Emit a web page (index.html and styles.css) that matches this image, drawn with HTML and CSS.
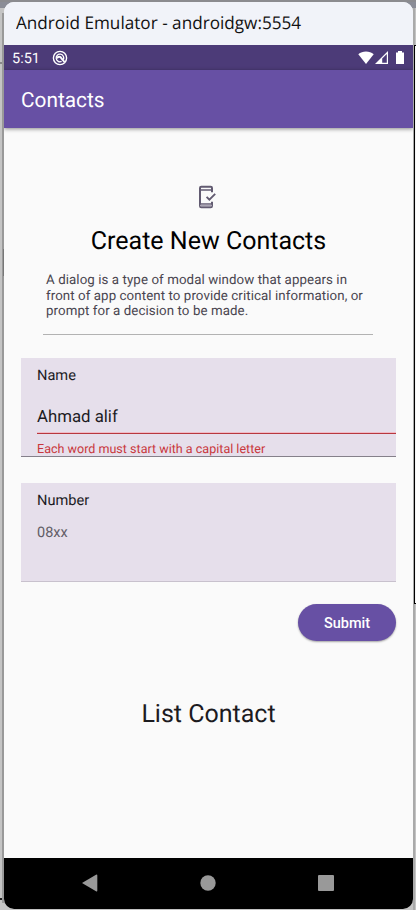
FILE: index.html
```html
<!DOCTYPE html>
<html lang="en">
<head>
<meta charset="utf-8">
<title>Android Emulator - androidgw:5554</title>
<link rel="stylesheet" href="styles.css">
</head>
<body>
<div class="desktop">
  <div class="window">
    <div class="titlebar"><span class="title-text">Android Emulator - androidgw:5554</span></div>
    <div class="statusbar">
      <span class="clock">5:51</span>
      <svg class="notice" width="16" height="16" viewBox="0 0 16 16"><circle cx="8" cy="8" r="6.6" fill="none" stroke="#fff" stroke-width="1.4"/><path d="M11.400 9.600A3.800 3.800 0 1 0 9.600 11.400" fill="none" stroke="#fff" stroke-width="1.300"/><path d="M5 8.300C6 6.200 8.500 6.200 9.300 8.200L12.500 12" fill="none" stroke="#fff" stroke-width="1.900"/></svg>
      <svg class="signals" width="48" height="14" viewBox="0 0 48 14"><path d="M.3 3.300C4.400-.3 11.600-.3 15.700 3.300L8 13z" fill="#fff"/><path d="M17 13 30 0v13z" fill="#fff"/><path d="M24.200 7.500 28.800 3v8.800h-4.600z" fill="#4c3b78"/><path d="M38 1.500h2V0h4v1.500h2V13h-8z" fill="#fff"/></svg>
    </div>
    <header class="appbar">Contacts</header>
    <main class="content">
      <svg class="phone-icon" width="20" height="24" viewBox="0 0 20 24"><path d="M16 7.200V3Q16 1.700 14.700 1.700H5.300Q4 1.700 4 3V21Q4 22.300 5.300 22.300H14.700Q16 22.300 16 21V16.800" fill="none" stroke="#625b71" stroke-width="2"/><path d="M4 5h12M4 19h12" stroke="#625b71" stroke-width="1.400"/><path d="M4 20.500h12" stroke="#aaa5b3" stroke-width="1.600"/><path d="M10.600 11.800 13.400 14.600 19.200 8.900" fill="none" stroke="#625b71" stroke-width="1.900"/></svg>
      <h1 class="heading">Create New Contacts</h1>
      <p class="intro">A dialog is a type of modal window that appears in<br>front of app content to provide critical information, or<br>prompt for a decision to be made.</p>
      <div class="divider"></div>
      <section class="field field-error">
        <div class="label">Name</div>
        <div class="value">Ahmad alif</div>
        <div class="error-line"></div>
        <div class="error">Each word must start with a capital letter</div>
      </section>
      <section class="field">
        <div class="label">Number</div>
        <div class="hint">08xx</div>
      </section>
      <button class="submit">Submit</button>
      <h2 class="list-title">List Contact</h2>
    </main>
    <nav class="navbar">
      <svg width="16" height="18" viewBox="0 0 16 18"><path d="M0 9 14 .8Q15.300.2 15.300 1.500V16.500Q15.300 17.800 14 17.200z" fill="#999"/></svg>
      <svg width="16" height="16" viewBox="0 0 16 16"><circle cx="8" cy="8" r="7.700" fill="#999"/></svg>
      <svg width="16" height="16" viewBox="0 0 16 16"><rect width="16" height="16" rx="1" fill="#999"/></svg>
    </nav>
  </div>
</div>
</body>
</html>
```
FILE: styles.css
```css
* { box-sizing: border-box; }
body { margin: 0; font-family: Roboto, sans-serif; text-rendering: geometricPrecision; }
.desktop {
  width: 416px;
  height: 910px;
  padding: 2px 3px 1px 4px;
  overflow: hidden;
  background:
    linear-gradient(#777, #777) 3px 249px / 1px 27px no-repeat,
    linear-gradient(#999, #999) 2px 13px / 2px 890px no-repeat,
    linear-gradient(#888, #888) 0 62px / 4px 2px no-repeat,
    linear-gradient(#222, #222) 0 898px / 5px 2px no-repeat,
    linear-gradient(#8b8b8f, #8b8b8f) 0 0 / 416px 2px no-repeat,
    linear-gradient(#8b8d97, #8b8d97) 0 0 / 416px 8px no-repeat,
    linear-gradient(#000, #000) 414px 45px / 2px 1px no-repeat,
    linear-gradient(#000, #000) 414px 603px / 2px 1px no-repeat,
    linear-gradient(#000, #000) 414px 45px / 1px 559px no-repeat,
    linear-gradient(#f5f5f5, #f5f5f5) 415px 46px / 1px 557px no-repeat,
    linear-gradient(#aaa, #aaa) 413px 8px / 2px 902px no-repeat,
    #c4c4c4;
}
.window {
  display: flex;
  flex-direction: column;
  height: 907px;
  border-radius: 10px;
  overflow: hidden;
  background: #fafafa;
}
.titlebar {
  height: 43px;
  padding: 0 12px;
  background: #f1f3f9;
  color: #111;
  font: 17.5px/42px "Open Sans", sans-serif;
  white-space: nowrap;
}
.title-text { display: inline-block; transform: scaleX(.98); transform-origin: left; }
.statusbar {
  display: flex;
  align-items: center;
  height: 25px;
  padding: 0 7px 0 8px;
  background: #4c3b78;
  color: #fff;
}
.clock { width: 40px; padding-top: 1px; font-size: 14.500px; line-height: 25px; }
.signals { margin-left: auto; }
.appbar {
  position: relative;
  height: 58px;
  padding: 1px 0 0 17px;
  background: #6750a4;
  color: #fff;
  font-size: 20.800px;
  line-height: 61px;
  box-shadow: 0 1px 4px rgba(0, 0, 0, .45);
}
.content {
  display: flex;
  flex-direction: column;
  height: 730px;
  padding: 57px 17px 0;
}
.phone-icon { margin-left: 175px; }
.heading {
  margin: 18px 0 0;
  color: #000;
  font-size: 25px;
  font-weight: 400;
  line-height: 30px;
  text-align: center;
}
.intro {
  margin: 16px 0 0 25px;
  color: #49454f;
  font-size: 13.300px;
  line-height: 15.700px;
  letter-spacing: .08px;
  white-space: nowrap;
}
.divider { height: 1px; margin: 14px 23px 0 22px; background: #b2b2b2; }
.field {
  height: 99px;
  margin-top: 23px;
  padding-left: 16px;
  background: #e6dfeb;
  border-bottom: 1px solid #c8c1cd;
}
.field + .field { margin-top: 26px; }
.field-error { border-bottom: 1px solid #85808a; }
.label { padding-top: 9px; color: #1c1b1f; font-size: 14.600px; line-height: 17px; }
.value {
  height: 48px;
  padding-top: 23px;
  color: #1c1b1f;
  font-size: 16.800px;
  line-height: 20px;
}
.error-line { height: 2px; background: #b8383f; border-top: 1px solid #f0bcc8; }
.error { padding-top: 8px; color: #c9373c; font-size: 12.550px; line-height: 16px; }
.hint { padding-top: 15px; color: #625d66; font-size: 14.500px; line-height: 18px; }
.submit {
  align-self: flex-end;
  width: 98px;
  height: 37px;
  margin-top: 22px;
  padding: 2px 0 0;
  border: 0;
  border-radius: 19px;
  background: #6750a4;
  color: #fff;
  font: 500 14.500px/35px Roboto, sans-serif;
  box-shadow: 0 1px 2px rgba(0, 0, 0, .35);
}
.list-title {
  margin: 58px 0 0;
  color: #1c1b1f;
  font-size: 25px;
  font-weight: 400;
  line-height: 31px;
  text-align: center;
}
.navbar {
  display: flex;
  align-items: center;
  justify-content: space-between;
  height: 51px;
  padding: 0 79px 1px 78px;
  background: #000;
}
```
